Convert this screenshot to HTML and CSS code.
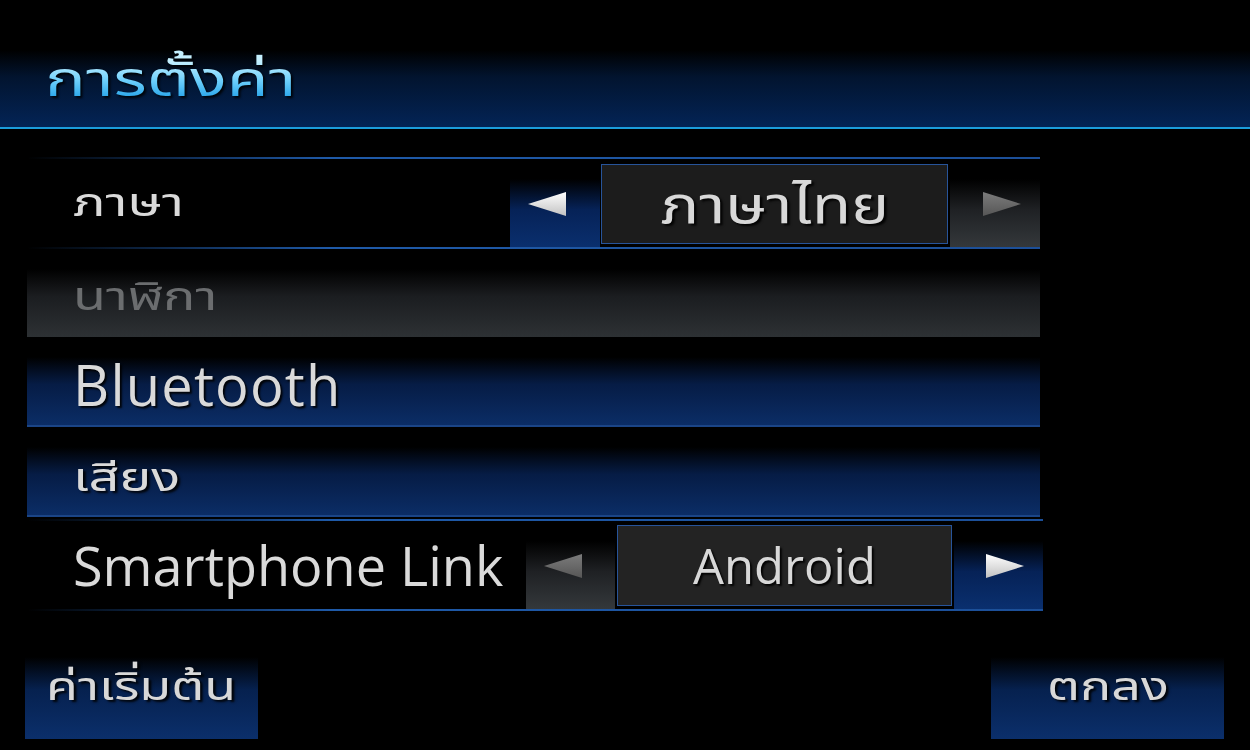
FILE: index.html
```html
<!DOCTYPE html>
<html lang="th">
<head>
<meta charset="utf-8">
<link rel="stylesheet" href="styles.css">
</head>
<body>
<div class="screen">
  <header class="header">
    <h1 class="title"><span class="th th-left">การตั้งค่า</span></h1>
  </header>

  <div class="list">
    <div class="row row-select row-lang">
      <div class="label"><span class="th th-left">ภาษา</span></div>
      <div class="arrow-box arrow-blue arrow-left">
        <svg class="tri" width="40" height="26" viewBox="0 0 40 26"><polygon points="1,13 39,1 39,25" class="tri-white"/></svg>
      </div>
      <div class="value-box"><span class="th th-center th-value">ภาษาไทย</span></div>
      <div class="arrow-box arrow-gray arrow-right">
        <svg class="tri" width="40" height="26" viewBox="0 0 40 26"><polygon points="39,13 1,1 1,25" class="tri-gray"/></svg>
      </div>
    </div>

    <div class="row row-bar bar-gray">
      <div class="label label-dim"><span class="th th-left">นาฬิกา</span></div>
    </div>

    <div class="row row-bar bar-blue row-bt">
      <div class="label label-latin label-bt">Bluetooth</div>
    </div>

    <div class="row row-bar bar-blue row-sound">
      <div class="label"><span class="th th-left">เสียง</span></div>
    </div>

    <div class="row row-select row-link">
      <div class="label label-latin">Smartphone Link</div>
      <div class="arrow-box arrow-gray arrow-left">
        <svg class="tri" width="40" height="26" viewBox="0 0 40 26"><polygon points="1,13 39,1 39,25" class="tri-gray"/></svg>
      </div>
      <div class="value-box value-latin">Android</div>
      <div class="arrow-box arrow-blue arrow-right">
        <svg class="tri" width="40" height="26" viewBox="0 0 40 26"><polygon points="39,13 1,1 1,25" class="tri-white"/></svg>
      </div>
    </div>
  </div>

  <footer class="footer">
    <button class="btn"><span class="th th-center">ค่าเริ่มต้น</span></button>
    <button class="btn"><span class="th th-center">ตกลง</span></button>
  </footer>
</div>
<svg width="0" height="0" class="defs">
  <defs>
    <linearGradient id="gw" x1="0" y1="0" x2="0" y2="1">
      <stop offset="0" stop-color="#ffffff"/>
      <stop offset="1" stop-color="#c2c2c2"/>
    </linearGradient>
    <linearGradient id="gg" x1="0" y1="0" x2="0" y2="1">
      <stop offset="0" stop-color="#7c7c7c"/>
      <stop offset="1" stop-color="#565656"/>
    </linearGradient>
  </defs>
</svg>
</body>
</html>
```

FILE: styles.css
```css
* { box-sizing: border-box; }
html, body {
  margin: 0;
  padding: 0;
  background: #000;
}
body {
  width: 1250px;
  height: 750px;
  overflow: hidden;
  font-family: "Open Sans", "Noto Sans Thai", "Noto Sans", "DejaVu Sans", sans-serif;
  color: #d6d6d6;
}
.defs { position: absolute; }
.screen {
  width: 1250px;
  height: 750px;
  padding-top: 50px;
}
.th {
  display: inline-block;
  transform: scaleX(1.3);
}
.th-left { transform-origin: left center; }
.th-center { transform-origin: center center; }

.header {
  height: 79px;
  background: linear-gradient(to bottom, #000 0%, #02142f 35%, #032456 100%);
  border-bottom: 2px solid #1b9ddb;
  display: flex;
  align-items: flex-start;
  padding-left: 45px;
}
.title {
  margin: 0;
  padding-top: 0;
  font-size: 48px;
  font-weight: normal;
  line-height: 56px;
  filter: drop-shadow(2px 2px 1px rgba(0,0,0,0.85));
}
.title .th {
  transform: scaleX(1.42);
  color: #6fd2ff;
  background: linear-gradient(to bottom, #c4f0ff 20%, #6ccffc 55%, #2aa6ea 85%);
  -webkit-background-clip: text;
  background-clip: text;
  -webkit-text-fill-color: transparent;
}
.list {
  margin: 28px 0 0 27px;
  width: 1013px;
  display: flex;
  flex-direction: column;
}
.row {
  display: flex;
  align-items: center;
}
.label {
  padding-left: 46px;
  font-size: 40px;
  color: #dadada;
  text-shadow: 2px 2px 2px rgba(0,0,0,0.9);
  white-space: nowrap;
}
.label .th { transform: scaleX(1.35); }
.label-latin { font-size: 54px; }
.label-bt { font-size: 56px; letter-spacing: 1.2px; }
.label-dim { color: #6b6d6f; text-shadow: none; }

.row-select {
  height: 92px;
  background:
    linear-gradient(to right, rgba(31,90,168,0) 0%, #1f5aa8 30%, #1c4f98 100%) top / 100% 2px no-repeat,
    linear-gradient(to right, rgba(31,90,168,0) 0%, #1f5aa8 30%, #1c4f98 100%) bottom / 100% 2px no-repeat,
    #000;
  align-items: stretch;
}
.row-select .label {
  flex: 1;
  display: flex;
  align-items: center;
}
.arrow-box {
  width: 90px;
  margin: 22px 0 2px;
  padding-bottom: 18px;
  display: flex;
  align-items: center;
  justify-content: center;
}
.arrow-left { padding-right: 16px; }
.arrow-right { padding-left: 14px; }
.arrow-blue {
  background: linear-gradient(to bottom, #000 0%, #062257 45%, #0a2f6e 100%);
}
.arrow-gray {
  background: linear-gradient(to bottom, #000 0%, #1f2124 45%, #34383b 100%);
}
.tri { display: block; }
.tri-white { fill: url(#gw); }
.tri-gray { fill: url(#gg); }

.value-box {
  width: 347px;
  margin: 7px 2px 5px 1px;
  background: #1c1c1c;
  border: 1px solid #27549a;
  display: flex;
  align-items: center;
  justify-content: center;
  font-size: 51px;
  color: #d8d8d8;
  text-shadow: 2px 2px 2px rgba(0,0,0,0.9);
  padding-top: 6px;
}
.th-value { transform: scaleX(1.26); }
.value-latin {
  font-size: 49px;
  width: 337px;
  background: #232323;
  margin: 6px 2px 5px 2px;
  padding-top: 0;
  padding-bottom: 2px;
}
.row-link { margin-top: 2px; width: 1016px; }
.row-link .label { flex: 0 0 499px; }

.row-bar {
  height: 68px;
  margin-top: 20px;
}
.bar-gray {
  background: linear-gradient(to bottom, #000 0%, #1b1d20 40%, #2d3134 100%);
  padding-bottom: 12px;
}
.bar-blue {
  background: linear-gradient(to bottom, #000 0%, #061c45 40%, #0b2d66 100%);
  border-bottom: 2px solid #1b4587;
  height: 70px;
}
.row-bt { padding-bottom: 14px; }
.row-sound { padding-bottom: 6px; }

.footer {
  display: flex;
  justify-content: space-between;
  padding: 46px 26px 0 25px;
}
.btn {
  width: 233px;
  height: 82px;
  border: none;
  margin: 0;
  background: linear-gradient(to bottom, #000 0%, #06214f 40%, #0b2f6b 100%);
  font-family: "Open Sans", "Noto Sans Thai", "Noto Sans", sans-serif;
  font-size: 40px;
  color: #d8d8d8;
  text-shadow: 2px 2px 2px rgba(0,0,0,0.9);
  padding: 0 0 22px 0;
}
```
